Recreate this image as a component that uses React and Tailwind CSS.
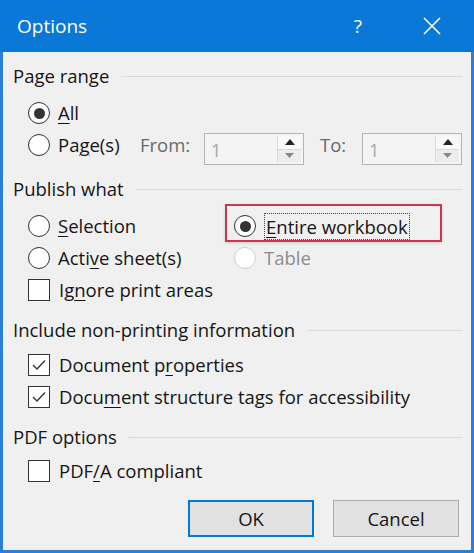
import React from "react";

const FONT = { fontFamily: '"Open Sans", "Noto Sans", Arial, sans-serif' };

// Mnemonic: underline one letter like Windows access keys
function U({ children }) {
  return <span className="underline underline-offset-[3px] decoration-1">{children}</span>;
}

function Radio({ checked, disabled }) {
  return (
    <span
      className={`-mx-px flex h-[22px] w-[22px] shrink-0 items-center justify-center rounded-full border-[1.5px] bg-white ${
        disabled ? "border-[#cfcfcf]" : "border-[#333]"
      }`}
    >
      {checked && <span className="h-[11px] w-[11px] rounded-full bg-[#333]" />}
    </span>
  );
}

function Check({ checked }) {
  return (
    <span className="-ml-px flex h-[22px] w-[22px] shrink-0 items-center justify-center border-[1.5px] border-[#333] bg-white">
      {checked && (
        <svg width="16" height="16" viewBox="0 0 16 16">
          <path d="M2 8 L6 12 L14 3.5" fill="none" stroke="#333" strokeWidth="1.4" />
        </svg>
      )}
    </span>
  );
}

function Group({ title, className = "" }) {
  return (
    <div className={`flex h-[24px] items-center gap-[12px] ${className}`}>
      <span className="whitespace-nowrap text-[18.5px] text-[#151515]">{title}</span>
      <div className="h-px flex-1 bg-[#d9d9d9]" />
    </div>
  );
}

function Row({ children, className = "" }) {
  return (
    <div className={`flex h-[32px] items-center gap-[9px] whitespace-nowrap text-[18.5px] text-[#151515] ${className}`}>
      {children}
    </div>
  );
}

function Spin() {
  return (
    <div className="flex h-[32px] w-[100px] shrink-0 items-stretch border border-[#b5b5b5] bg-[#f4f4f4]">
      <span className="flex-1 pl-[6px] pt-[3px] text-[18px] text-[#a8a8a8]">1</span>
      <div className="my-[2px] mr-[2px] flex w-[24px] flex-col border-l border-[#dadada]">
        <div className="flex flex-1 items-center justify-center border-b border-[#dadada] bg-[#f8f8f8]">
          <svg width="10" height="6" viewBox="0 0 10 6">
            <path d="M0 6 L5 0 L10 6 Z" fill="#222" />
          </svg>
        </div>
        <div className="flex flex-1 items-center justify-center bg-[#ececec]">
          <svg width="9" height="5" viewBox="0 0 9 5">
            <path d="M0 0 L4.5 5 L9 0 Z" fill="#888" />
          </svg>
        </div>
      </div>
    </div>
  );
}

export default function App() {
  return (
    <div
      className="flex h-[553px] w-[474px] flex-col border-x-[3px] border-b-[3px] border-[#2a80d6] bg-[#f0f0f0]"
      style={FONT}
    >
      {/* Title bar */}
      <div className="-mx-[3px] flex h-[52px] shrink-0 items-center bg-[#0a78d6] pl-[17px] pr-[33px] text-white">
        <span className="flex-1 text-[19px]">Options</span>
        <span className="mr-[61px] text-[19px]">?</span>
        <svg width="18" height="18" viewBox="0 0 18 18">
          <path d="M1 1 L17 17 M17 1 L1 17" stroke="white" strokeWidth="1.6" />
        </svg>
      </div>

      <div className="flex flex-1 flex-col pl-[10px] pr-[9px]">
        <Group title="Page range" className="mt-[12px]" />
        <div className="mt-[9px] pl-[16px]">
          <Row>
            <Radio checked />
            <span><U>A</U>ll</span>
          </Row>
          <Row>
            <Radio />
            <span className="w-[73px]">Pa<U>g</U>e(s)</span>
            <span className="w-[55px] text-[#6a6a6a]">From:</span>
            <div className="mt-[8px]"><Spin /></div>
            <span className="ml-[7px] w-[33px] text-[#6a6a6a]">To:</span>
            <div className="mt-[8px]"><Spin /></div>
          </Row>
        </div>

        <Group title="Publish what" className="mt-[16px]" />
        <div className="mt-[9px] grid grid-cols-[206px_1fr] pl-[16px]">
          <Row>
            <Radio />
            <span><U>S</U>election</span>
          </Row>
          <div className="relative">
            <Row>
              <Radio checked />
              <span className="border border-dotted border-[#444] px-[1px] leading-[25px]"><U>E</U>ntire workbook</span>
            </Row>
            <div className="pointer-events-none absolute -top-[6px] left-[-10px] h-[38px] w-[217px] border-2 border-[#c8384f] shadow-[0_1px_3px_rgba(0,0,0,0.15)]" />
          </div>
          <Row>
            <Radio />
            <span>Acti<U>v</U>e sheet(s)</span>
          </Row>
          <Row>
            <Radio disabled />
            <span className="text-[#8c8c8c]">Table</span>
          </Row>
          <Row className="col-span-2">
            <Check />
            <span>Ig<U>n</U>ore print areas</span>
          </Row>
        </div>

        <Group title="Include non-printing information" className="mt-[12px]" />
        <div className="pl-[16px]">
          <Row className="mt-[7px]">
            <Check checked />
            <span>Document p<U>r</U>operties</span>
          </Row>
          <Row>
            <Check checked />
            <span>Docu<U>m</U>ent structure tags for accessibility</span>
          </Row>
        </div>

        <Group title="PDF options" className="mt-[12px]" />
        <div className="pl-[16px]">
          <Row className="mt-[6px]">
            <Check />
            <span>PDF<U>/</U>A compliant</span>
          </Row>
        </div>

        <div className="mt-[13px] flex justify-end gap-[19px] pr-[3px]">
          <button className="h-[37px] w-[126px] border-2 border-[#0078d7] bg-[#e1e1e1] text-[18.5px] text-[#151515]">
            OK
          </button>
          <button className="h-[37px] w-[126px] border border-[#adadad] bg-[#e1e1e1] text-[18.5px] text-[#151515]">
            Cancel
          </button>
        </div>
      </div>
    </div>
  );
}
